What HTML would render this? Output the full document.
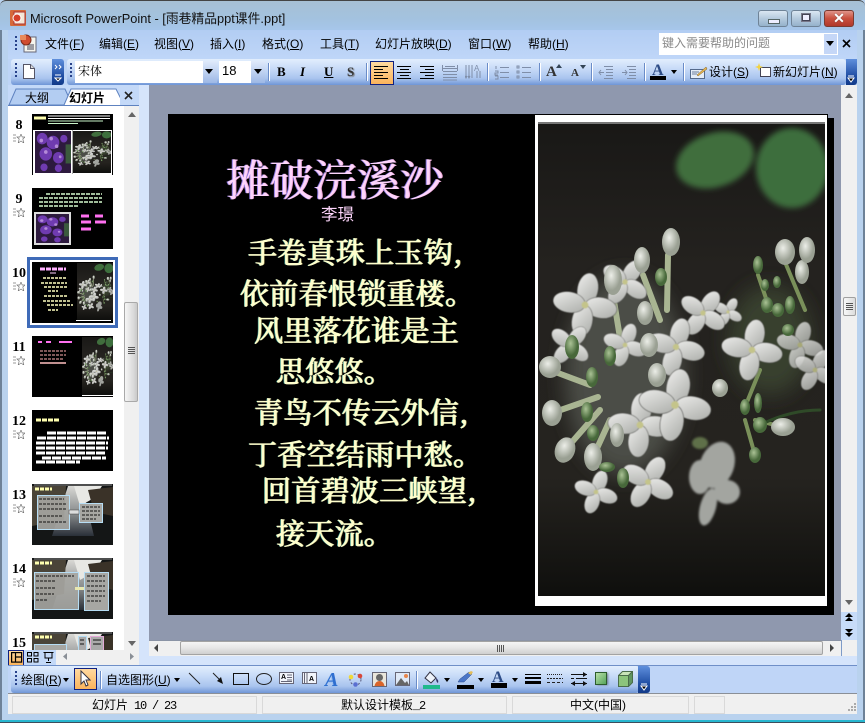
<!DOCTYPE html>
<html lang="zh"><head><meta charset="utf-8"><title>Microsoft PowerPoint</title>
<style>
html,body{margin:0;padding:0;width:865px;height:723px;overflow:hidden;background:#b9d2ee}
body{position:relative;font:12px "Liberation Sans","Noto Sans CJK SC",sans-serif;color:#000}
.a,.t,svg.i{position:absolute}
.t{white-space:nowrap;line-height:16px}
u{text-decoration:underline}
.tb{background:linear-gradient(#e2eefd 0%,#c9dcf8 35%,#a9c4ee 75%,#6f95d6 100%);border-radius:3px}
.cap{background:linear-gradient(#5f8fdc,#1c4aa0 70%,#123a88)}
.sep{position:absolute;width:1px;background:#6a8cc8;border-right:1px solid #fff}
.grip{position:absolute;width:2px;height:14px;background:repeating-linear-gradient(#27418a 0 2px,transparent 2px 4px)}
.num{position:absolute;left:9px;width:20px;text-align:center;font:bold 14px "Liberation Serif",serif}
.star{position:absolute;left:13px;width:12px;height:9px}
.th{position:absolute;left:32px;width:81px;height:61px;background:#000;overflow:hidden}
.p{position:absolute;font:400 29px/38px "Noto Serif CJK SC","Liberation Serif",serif;color:#ffffcc;-webkit-text-stroke:.7px #ffffcc;text-shadow:-1px 0 0 #3f9f9a,1px 0 0 #a89a60;white-space:nowrap;letter-spacing:.3px}
.btn{position:absolute;background:linear-gradient(#ffd9a0,#fbb45c);border:1px solid #10207f}
.m{font:12px/16px 'Liberation Mono',monospace;letter-spacing:-1.2px}
</style></head><body>
<svg width="0" height="0" style="position:absolute"><defs>
<linearGradient id="pt" x1="0" y1="0" x2="1" y2="1"><stop offset="0" stop-color="#eeeeec"/><stop offset="1" stop-color="#a9aba7"/></linearGradient>
<radialGradient id="bud" cx=".4" cy=".35"><stop offset="0" stop-color="#eceee8"/><stop offset="1" stop-color="#9aa093"/></radialGradient>
<radialGradient id="gb" cx=".4" cy=".35"><stop offset="0" stop-color="#aac295"/><stop offset="1" stop-color="#47683a"/></radialGradient>
<linearGradient id="bg" x1="0" y1="0" x2="0" y2="1"><stop offset="0" stop-color="#191816"/><stop offset=".3" stop-color="#24221f"/><stop offset=".75" stop-color="#25231f"/><stop offset="1" stop-color="#0f0f0d"/></linearGradient>
<filter id="b8"><feGaussianBlur stdDeviation="3"/></filter><filter id="b12"><feGaussianBlur stdDeviation="10"/></filter><filter id="b2"><feGaussianBlur stdDeviation="1"/></filter><filter id="b1"><feGaussianBlur stdDeviation=".5"/></filter>
<g id="f4"><g fill="url(#pt)" stroke="#4a4a46" stroke-width=".5"><ellipse cx="0" cy="-14" rx="9" ry="14"/><ellipse cx="14" cy="0" rx="14" ry="9"/><ellipse cx="0" cy="14" rx="9" ry="14"/><ellipse cx="-14" cy="0" rx="14" ry="9"/></g><circle r="3" fill="#c4c48a"/></g>
<symbol id="fl" viewBox="538 124 287 472" preserveAspectRatio="none">
<rect x="538" y="124" width="287" height="472" fill="url(#bg)"/>
<g filter="url(#b8)"><ellipse cx="715" cy="160" rx="40" ry="27" fill="#3f6e3d" transform="rotate(-18 715 160)"/><ellipse cx="792" cy="168" rx="36" ry="40" fill="#3d6e3e"/></g>
<g filter="url(#b12)"><ellipse cx="625" cy="375" rx="60" ry="100" fill="#4c4d47"/><ellipse cx="770" cy="340" rx="42" ry="55" fill="#39402f"/></g>
<g filter="url(#b2)" fill="#a3a5a0"><ellipse cx="717" cy="465" rx="17" ry="24" transform="rotate(20 717 465)"/><ellipse cx="700" cy="477" rx="11" ry="17"/><ellipse cx="727" cy="492" rx="13" ry="12"/><ellipse cx="708" cy="507" rx="8" ry="19" transform="rotate(15 708 507)"/><ellipse cx="700" cy="443" rx="8" ry="6" fill="#5f7048"/></g>
<g stroke="#a9b592" stroke-width="6" fill="none" stroke-linecap="round"><path d="M668 255 L667 310M643 275 L660 320M613 295 L622 350M550 370 L590 385M552 413 L598 397M565 450 L600 410M593 457 L610 420"/><path d="M785 262 L805 310M758 275 L770 310M745 407 L760 370M755 455 L745 420M783 427 L755 420" stroke="#7a905a" stroke-width="4"/><path d="M760 425 Q790 410 820 410" stroke="#2f4a28" stroke-width="3"/></g>
<g filter="url(#b1)">
<use href="#f4" transform="translate(800 345) rotate(15) scale(.85)" opacity=".8"/>
<use href="#f4" transform="translate(752 350) rotate(10) scale(1.1)"/>
<use href="#f4" transform="translate(815 370) rotate(30) scale(.8)" opacity=".85"/>
<use href="#f4" transform="translate(728 312) rotate(30) scale(.55)"/>
<use href="#f4" transform="translate(703 313) rotate(35) scale(.9)"/>
<use href="#f4" transform="translate(625 282) rotate(35) scale(.9)"/>
<use href="#f4" transform="translate(585 305) rotate(10) scale(1.15)"/>
<use href="#f4" transform="translate(570 345) rotate(40) scale(.8)"/>
<use href="#f4" transform="translate(625 345) rotate(20) scale(.8)"/>
<use href="#f4" transform="translate(676 347) rotate(15) scale(1.05)"/>
<use href="#f4" transform="translate(640 425) rotate(5) scale(1.15)"/>
<use href="#f4" transform="translate(675 405) rotate(10) scale(1.3)"/>
<use href="#f4" transform="translate(648 482) rotate(30) scale(1)"/>
<use href="#f4" transform="translate(596 492) rotate(20) scale(.8)"/>
</g>
<g fill="url(#bud)"><ellipse cx="671" cy="242" rx="9" ry="14"/><ellipse cx="642" cy="260" rx="8" ry="13"/><ellipse cx="613" cy="280" rx="9" ry="15"/><ellipse cx="645" cy="313" rx="8" ry="12"/><ellipse cx="649" cy="345" rx="9" ry="12"/><ellipse cx="550" cy="367" rx="11" ry="11"/><ellipse cx="552" cy="413" rx="10" ry="13"/><ellipse cx="565" cy="450" rx="10" ry="13" transform="rotate(20 565 450)"/><ellipse cx="593" cy="457" rx="9" ry="14"/><ellipse cx="617" cy="435" rx="7" ry="12"/><ellipse cx="657" cy="375" rx="9" ry="12"/><ellipse cx="785" cy="252" rx="10" ry="13"/><ellipse cx="802" cy="272" rx="7" ry="12"/><ellipse cx="807" cy="250" rx="8" ry="13"/><ellipse cx="720" cy="388" rx="8" ry="9"/><ellipse cx="783" cy="427" rx="12" ry="9"/></g>
<g fill="url(#gb)"><ellipse cx="661" cy="277" rx="6" ry="9"/><ellipse cx="572" cy="347" rx="7" ry="12"/><ellipse cx="610" cy="356" rx="6" ry="10"/><ellipse cx="592" cy="377" rx="6" ry="10"/><ellipse cx="587" cy="412" rx="6" ry="10"/><ellipse cx="593" cy="433" rx="6" ry="8"/><ellipse cx="607" cy="467" rx="8" ry="5"/><ellipse cx="623" cy="478" rx="6" ry="10"/><ellipse cx="758" cy="265" rx="5" ry="9"/><ellipse cx="767" cy="305" rx="6" ry="8"/><ellipse cx="790" cy="305" rx="5" ry="9"/><ellipse cx="778" cy="310" rx="6" ry="7"/><ellipse cx="788" cy="330" rx="6" ry="6"/><ellipse cx="765" cy="285" rx="4" ry="6"/><ellipse cx="777" cy="282" rx="4" ry="6"/><ellipse cx="760" cy="425" rx="7" ry="8"/><ellipse cx="745" cy="407" rx="5" ry="8"/><ellipse cx="758" cy="403" rx="4" ry="10"/><ellipse cx="755" cy="455" rx="6" ry="8"/></g>
</symbol>
<symbol id="pur" viewBox="0 0 40 44" preserveAspectRatio="none"><rect width="40" height="44" fill="#2d1a3e"/><g fill="#6f3bb0"><circle cx="8" cy="8" r="6"/><circle cx="20" cy="12" r="7"/><circle cx="32" cy="8" r="4"/><circle cx="12" cy="24" r="7"/><circle cx="26" cy="28" r="6"/><circle cx="10" cy="38" r="4"/><circle cx="26" cy="39" r="4"/></g><g fill="#b48ad8"><circle cx="7" cy="10" r="2"/><circle cx="18" cy="8" r="2"/><circle cx="24" cy="16" r="2"/><circle cx="12" cy="22" r="2"/><circle cx="28" cy="27" r="1.5"/></g><rect x="34" y="14" width="6" height="20" fill="#3b5a3d"/></symbol>
<linearGradient id="alley" x1="0" y1="0" x2="0" y2="1"><stop offset="0" stop-color="#d8d8d4"/><stop offset=".6" stop-color="#7f8284"/><stop offset="1" stop-color="#2a3038"/></linearGradient>
<symbol id="st" viewBox="0 0 81 61" preserveAspectRatio="none"><rect width="81" height="61" fill="#141616"/><path d="M36 2 L50 2 L62 52 L20 52Z" fill="url(#alley)"/><path d="M42 2L70 2L62 14L48 22Z" fill="#e8e8e4"/><path d="M0 2 L34 2 L32 36 L0 42Z" fill="#4a4438"/><path d="M56 6 L81 3 L81 32 L62 28Z" fill="#3a3228"/><path d="M2 1h78" stroke="#888"/></symbol>
</defs></svg>

<!-- window frame + title -->
<div class="a" style="left:0;top:0;width:865px;height:30px;background:linear-gradient(#a7c0d4,#a3c2df 60%,#a6c6ea);border-top:1px solid #444;box-sizing:border-box;border-radius:6px 6px 0 0"></div>
<div class="a" style="left:0;top:30px;width:2px;height:693px;background:#6e8298"></div>
<div class="a" style="right:0;top:30px;width:2px;height:693px;background:#6e8298"></div>
<svg class="i" style="left:10px;top:10px" width="16" height="16"><rect width="16" height="16" rx="1" fill="#d5693a"/><rect x="4" y="2" width="11" height="12" fill="#f4e6d6" stroke="#a33"/><circle cx="7" cy="8" r="4" fill="#d5402a" stroke="#fff"/></svg>
<div class="t" style="left:30px;top:11px;font-size:12.8px;color:#111">Microsoft PowerPoint - [雨巷精品ppt课件.ppt]</div>
<div class="a" style="left:758px;top:10px;width:30px;height:17px;box-sizing:border-box;border:1px solid #6f8397;border-radius:3px;background:linear-gradient(#dbe7f2,#b5cadd 50%,#95b2cb)"><div class="a" style="left:9px;top:8px;width:10px;height:3px;background:#eef;border:1px solid #566"></div></div>
<div class="a" style="left:791px;top:10px;width:30px;height:17px;box-sizing:border-box;border:1px solid #6f8397;border-radius:3px;background:linear-gradient(#dbe7f2,#b5cadd 50%,#95b2cb)"><div class="a" style="left:10px;top:3px;width:6px;height:5px;border:1px solid #445;outline:1px solid #778;background:#eef"></div></div>
<div class="a" style="left:824px;top:10px;width:30px;height:17px;box-sizing:border-box;border:1px solid #7a3a30;border-radius:3px;background:linear-gradient(#e0958a,#c9503e 50%,#b0382a);color:#fff;font:bold 14px/15px 'Liberation Sans',sans-serif;text-align:center;text-shadow:0 0 1px #444">✕</div>

<!-- menu band -->
<div class="a" style="left:8px;top:30px;width:849px;height:29px;background:linear-gradient(#b2cdf3,#bfd6f8)"></div>
<div class="grip" style="left:15px;top:36px;height:16px"></div>
<svg class="i" style="left:19px;top:34px" width="18" height="19"><rect x="5" y="3" width="12" height="15" fill="#f5f5ee" stroke="#667"/><path d="M8 11h7M8 13h7M8 15h7" stroke="#445"/><circle cx="7" cy="6" r="5" fill="#cf4b30" stroke="#7c2a1a"/><rect x="1" y="1" width="6" height="5" fill="#e88a5c"/></svg>
<div class="t" style="left:45px;top:36px">文件(<u>F</u>)</div><div class="t" style="left:99px;top:36px">编辑(<u>E</u>)</div><div class="t" style="left:154px;top:36px">视图(<u>V</u>)</div><div class="t" style="left:210px;top:36px">插入(<u>I</u>)</div><div class="t" style="left:262px;top:36px">格式(<u>O</u>)</div><div class="t" style="left:320px;top:36px">工具(<u>T</u>)</div><div class="t" style="left:375px;top:36px">幻灯片放映(<u>D</u>)</div><div class="t" style="left:468px;top:36px">窗口(<u>W</u>)</div><div class="t" style="left:528px;top:36px">帮助(<u>H</u>)</div>
<div class="a" style="left:659px;top:33px;width:164px;height:22px;background:#fff"></div>
<div class="a" style="left:823px;top:33px;width:13px;height:20px;background:#c5d7f7;border:1px solid #fff"></div>
<svg class="i" style="left:826px;top:41px" width="9" height="6"><path d="M0 0h8L4 5z" fill="#000"/></svg>
<div class="t" style="left:662px;top:35px;color:#8a8a8a">键入需要帮助的问题</div>
<svg class="i" style="left:842px;top:39px" width="9" height="9"><path d="M1 1l7 7M8 1L1 8" stroke="#000" stroke-width="1.6"/></svg>

<!-- toolbars row -->
<div class="a" style="left:8px;top:59px;width:849px;height:26px;background:#bdd4f6"></div>
<div class="a tb" style="left:11px;top:59px;width:52px;height:26px"></div>
<div class="a cap" style="left:52px;top:59px;width:12px;height:26px;border-radius:0 3px 3px 0"></div>
<div class="grip" style="left:15px;top:63px;height:14px"></div>
<svg class="i" style="left:23px;top:64px" width="12" height="15"><path d="M.5.5h7l4 4v10H.5z" fill="#fff" stroke="#556"/><path d="M7.5.5v4h4" fill="#ddd" stroke="#556"/></svg>
<svg class="i" style="left:54px;top:64px" width="8" height="20"><path d="M1 1l2 2-2 2M5 1l2 2-2 2" stroke="#fff" fill="none"/><path d="M1 11h6M1 14h6l-3 3z" stroke="#fff" fill="#000"/></svg>
<div class="a tb" style="left:67px;top:59px;width:779px;height:26px"></div>
<div class="a cap" style="left:846px;top:59px;width:11px;height:26px;border-radius:0 0 3px 0"></div>
<svg class="i" style="left:847px;top:75px" width="8" height="9"><path d="M1 1h6M1 3h6l-3 4z" stroke="#fff" fill="#000"/></svg>
<div class="grip" style="left:70px;top:63px;height:14px"></div>
<div class="a" style="left:75px;top:61px;width:128px;height:22px;background:#fff"></div>
<div class="a" style="left:203px;top:61px;width:14px;height:22px;background:linear-gradient(#dfeafb,#9db8e6)"></div>
<svg class="i" style="left:205px;top:69px" width="9" height="6"><path d="M0 0h8L4 5z"/></svg>
<div class="t" style="left:78px;top:63px;font-size:12px;font-family:'Noto Serif CJK SC',serif">宋体</div>
<div class="a" style="left:219px;top:61px;width:32px;height:22px;background:#fff"></div>
<div class="a" style="left:251px;top:61px;width:14px;height:22px;background:linear-gradient(#dfeafb,#9db8e6)"></div>
<svg class="i" style="left:254px;top:69px" width="9" height="6"><path d="M0 0h8L4 5z"/></svg>
<div class="t" style="left:222px;top:63px;font-size:13px">18</div>
<div class="sep" style="left:268px;top:63px;height:18px"></div>
<div class="t" style="left:277px;top:64px;font:bold 13px/16px 'Liberation Serif',serif">B</div>
<div class="t" style="left:300px;top:64px;font:italic bold 13px/16px 'Liberation Serif',serif">I</div>
<div class="t" style="left:324px;top:64px;font:bold 13px/16px 'Liberation Serif',serif;text-decoration:underline">U</div>
<div class="t" style="left:347px;top:64px;font:bold 13px/16px 'Liberation Serif',serif;color:#333;text-shadow:1px 1px 1px #777">S</div>
<div class="sep" style="left:366px;top:63px;height:18px"></div>
<div class="btn" style="left:370px;top:61px;width:22px;height:22px"></div>
<svg class="i" style="left:374px;top:65px" width="15" height="15"><path d="M0 1.5h14M0 4.5h9M0 7.5h14M0 10.5h9M0 13.5h14" stroke="#000"/></svg>
<svg class="i" style="left:397px;top:65px" width="15" height="15"><path d="M0 1.5h14M3 4.5h9M0 7.5h14M3 10.5h9M0 13.5h14" stroke="#000"/></svg>
<svg class="i" style="left:420px;top:65px" width="15" height="15"><path d="M0 1.5h14M5 4.5h9M0 7.5h14M5 10.5h9M0 13.5h14" stroke="#000"/></svg>
<svg class="i" style="left:442px;top:64px" width="16" height="17" stroke="#7f8ea8" fill="none"><path d="M1 4.5h14M1 7.5h14M1 10.5h14M1 13.5h14M1 16h14M.5 1v6M15.5 1v6M3 2.5h10"/></svg>
<svg class="i" style="left:465px;top:64px" width="16" height="17" stroke="#7f8ea8" fill="none"><path d="M1 1v13M4 1v13M7 1v13M12 7v7M15 7v7M0 12l1 2 1-2M3 12l1 2 1-2"/><text x="9" y="7" font-size="8" fill="#7f8ea8" stroke="none" font-family="Liberation Sans">A</text></svg>
<div class="sep" style="left:487px;top:63px;height:18px"></div>
<svg class="i" style="left:494px;top:65px" width="16" height="15" stroke="#7f8ea8"><path d="M6 2.5h9M6 7.5h9M6 12.5h9M2 1v3M1 6h3v2H1v2h3M1 11h3v3H1" fill="none"/></svg>
<svg class="i" style="left:516px;top:65px" width="16" height="15" stroke="#7f8ea8" fill="none"><path d="M6 2.5h9M6 7.5h9M6 12.5h9M1 1h2v2H1zM1 6h2v2H1zM1 11h2v2H1z"/></svg>
<div class="sep" style="left:539px;top:63px;height:18px"></div>
<div class="t" style="left:546px;top:63px;font:bold 15px/18px 'Liberation Serif',serif;color:#333">A</div>
<svg class="i" style="left:556px;top:64px" width="7" height="4"><path d="M0 4h6L3 0z" fill="#345"/></svg>
<div class="t" style="left:571px;top:66px;font:bold 11px/14px 'Liberation Serif',serif;color:#333">A</div>
<svg class="i" style="left:580px;top:65px" width="7" height="4"><path d="M0 0h6L3 4z" fill="#345"/></svg>
<div class="sep" style="left:591px;top:63px;height:18px"></div>
<svg class="i" style="left:598px;top:65px" width="16" height="15" stroke="#7f8ea8"><path d="M6 1.5h9M8 4.5h7M8 7.5h7M8 10.5h7M6 13.5h9M6 7.5H1M3 5L1 7.5 3 10" fill="none"/></svg>
<svg class="i" style="left:621px;top:65px" width="16" height="15" stroke="#7f8ea8"><path d="M6 1.5h9M8 4.5h7M8 7.5h7M8 10.5h7M6 13.5h9M1 7.5h5M4 5l2 2.5L4 10" fill="none"/></svg>
<div class="sep" style="left:644px;top:63px;height:18px"></div>
<div class="t" style="left:652px;top:62px;font:bold 16px/17px 'Liberation Serif',serif;color:#2d4c86">A</div>
<div class="a" style="left:650px;top:76px;width:16px;height:4px;background:#000"></div>
<svg class="i" style="left:671px;top:70px" width="7" height="4"><path d="M0 0h6L3 4z"/></svg>
<div class="sep" style="left:683px;top:63px;height:18px"></div>
<svg class="i" style="left:690px;top:65px" width="18" height="14"><rect x=".5" y="4.5" width="14" height="9" fill="#e5edf8" stroke="#556a8c"/><path d="M2 7h7M2 9h5" stroke="#6d7f9c"/><path d="M7 10l9-8 1 2-9 7z" fill="#e7b653" stroke="#7a5c22" stroke-width=".5"/></svg>
<div class="t" style="left:709px;top:64px">设计(<u>S</u>)</div>
<svg class="i" style="left:755px;top:63px" width="16" height="15"><rect x="5.500" y="4.500" width="10" height="9" fill="#fff" stroke="#445"/><path d="M4 0l1 3 3 1-3 1-1 3-1-3-3-1 3-1z" fill="#f3d23e"/></svg>
<div class="t" style="left:773px;top:64px">新幻灯片(<u>N</u>)</div>

<!-- left pane -->
<div class="a" style="left:8px;top:85px;width:141px;height:20px;background:#c4d9f8"></div>
<div class="a" style="left:8px;top:105px;width:131px;height:1px;background:#5e82c0"></div>
<svg class="i" style="left:8px;top:88px" width="112" height="18"><path d="M1 17 L8 1 H57 L62 12 L56 17Z" fill="#b3cdf2" stroke="#5e82c0"/><path d="M56 17 L63 1 H108 L116 17" fill="#fff" stroke="#5e82c0"/></svg>
<div class="t" style="left:25px;top:90px">大纲</div>
<div class="t" style="left:69px;top:90px;font-weight:bold">幻灯片</div>
<svg class="i" style="left:124px;top:91px" width="9" height="9"><path d="M1 1l7 7M8 1L1 8" stroke="#222" stroke-width="1.6"/></svg>
<div class="a" style="left:139px;top:85px;width:10px;height:580px;background:#d5e4fb"></div>
<div class="a" style="left:8px;top:106px;width:116px;height:544px;background:#fff"></div>
<div class="a" style="left:124px;top:106px;width:15px;height:544px;background:#f0f0f0"></div>
<svg class="i" style="left:128px;top:112px" width="9" height="5"><path d="M0 5h8L4 0z" fill="#666"/></svg>
<svg class="i" style="left:128px;top:641px" width="9" height="5"><path d="M0 0h8L4 5z" fill="#666"/></svg>
<div class="a" style="left:124px;top:302px;width:14px;height:100px;box-sizing:border-box;border:1px solid #a9a9a9;border-radius:2px;background:linear-gradient(90deg,#f6f6f6,#dadada 70%,#c9c9c9)"></div>
<div class="a" style="left:128px;top:347px;width:7px;height:8px;background:repeating-linear-gradient(#555 0 1px,transparent 1px 2px)"></div>

<!-- thumbnails -->
<div class="num" style="top:118px">8</div><svg class="star" style="top:134px" viewBox="0 0 12 9"><path d="M0 1h3M0 4h3M0 7h3M8 0l1.2 3H12L9.8 5l1 4L8 7 5.200 9l1-4L4 3h2.800z" fill="#fff" stroke="#777" stroke-width=".7"/></svg>
<div class="th" style="top:114px"><svg class="a" style="left:0;top:0" width="81" height="61"><path d="M2 4h12" stroke="#ffffb0" stroke-width="3"/><path d="M16 2h62M16 4.500h62" stroke="#fff"/><path d="M16 7h55" stroke="#c9f3c9"/><path d="M16 9.500h30" stroke="#c9f3c9"/><rect x="1" y="16" width="79" height="45" fill="#fff"/><use href="#pur" x="3" y="17" width="36" height="42"/><rect x="40" y="16" width="1" height="44" fill="#aaa"/><use href="#fl" x="41" y="17" width="38" height="42"/></svg></div>

<div class="num" style="top:192px">9</div><svg class="star" style="top:208px" viewBox="0 0 12 9"><path d="M0 1h3M0 4h3M0 7h3M8 0l1.2 3H12L9.8 5l1 4L8 7 5.200 9l1-4L4 3h2.800z" fill="#fff" stroke="#777" stroke-width=".7"/></svg>
<div class="th" style="top:188px"><svg width="81" height="61"><path d="M14 6h56M7 10h63M7 14h63M7 18h40" stroke="#d5fbcd" stroke-width="1.5" stroke-dasharray="4 1"/><rect x="2" y="24" width="37" height="33" fill="#ddd"/><use href="#pur" x="4" y="26" width="33" height="29"/><path d="M49 28h8M63 28h8M49 34h10M63 34h11M49 41h10" stroke="#ff70f0" stroke-width="3"/></svg></div>

<div class="a" style="left:27px;top:257px;width:91px;height:71px;box-sizing:border-box;border:3px solid #3f6bb8"></div>
<div class="num" style="top:266px">10</div><svg class="star" style="top:282px" viewBox="0 0 12 9"><path d="M0 1h3M0 4h3M0 7h3M8 0l1.2 3H12L9.8 5l1 4L8 7 5.200 9l1-4L4 3h2.800z" fill="#fff" stroke="#777" stroke-width=".7"/></svg>
<div class="th" style="top:262px"><svg width="81" height="61"><path d="M8 7h26" stroke="#ffb0ff" stroke-width="3" stroke-dasharray="5 1"/><path d="M18 11h6" stroke="#ffd0ff"/><path d="M11 16h23M9 21h26M12 25h24M16 29h10M12 34h24M11 39h27M15 43h26M16 48h10" stroke="#ffffc0" stroke-dasharray="3 1" stroke-width="1.400"/><use href="#fl" x="45" y="1" width="36" height="57"/><rect x="44" y="58" width="35" height="1" fill="#fff"/></svg></div>

<div class="num" style="top:340px">11</div><svg class="star" style="top:356px" viewBox="0 0 12 9"><path d="M0 1h3M0 4h3M0 7h3M8 0l1.2 3H12L9.8 5l1 4L8 7 5.200 9l1-4L4 3h2.800z" fill="#fff" stroke="#777" stroke-width=".7"/></svg>
<div class="th" style="top:336px"><svg width="81" height="61"><path d="M6 6h4M14 6h5M27 6h13" stroke="#ff70f0" stroke-width="2"/><path d="M8 15h26M8 19h26M8 23h24" stroke="#ffb0b0" stroke-dasharray="3 1"/><path d="M8 27h26" stroke="#ffc0c0" stroke-width="1.600"/><use href="#fl" x="50" y="1" width="31" height="58"/><rect x="50" y="59" width="31" height="1" fill="#fff"/></svg></div>

<div class="num" style="top:414px">12</div><svg class="star" style="top:430px" viewBox="0 0 12 9"><path d="M0 1h3M0 4h3M0 7h3M8 0l1.2 3H12L9.8 5l1 4L8 7 5.200 9l1-4L4 3h2.800z" fill="#fff" stroke="#777" stroke-width=".7"/></svg>
<div class="th" style="top:410px"><svg width="81" height="61"><path d="M4 10h24" stroke="#ffffb0" stroke-width="3" stroke-dasharray="5 1"/><path d="M15 23h60M5 28h72M4 33h72M4 38h72M4 43h70M10 48h64M4 52h44" stroke="#fff" stroke-width="3" stroke-dasharray="9 1"/></svg></div>

<div class="num" style="top:488px">13</div><svg class="star" style="top:504px" viewBox="0 0 12 9"><path d="M0 1h3M0 4h3M0 7h3M8 0l1.2 3H12L9.8 5l1 4L8 7 5.200 9l1-4L4 3h2.800z" fill="#fff" stroke="#777" stroke-width=".7"/></svg>
<div class="th" style="top:484px"><svg width="81" height="61"><use href="#st" width="81" height="61"/><path d="M3 5h17" stroke="#ffffb0" stroke-width="3" stroke-dasharray="4 1"/><rect x="5.500" y="11.500" width="32" height="34" fill="#a7a7a3" fill-opacity=".9" stroke="#b6ddf4"/><path d="M7 15h25M7 20h28M7 25h28M7 32h24M7 38h28" stroke="#111" stroke-dasharray="3 1"/><rect x="47.500" y="19.500" width="23" height="19" fill="#a7a7a3" stroke="#b6ddf4"/><path d="M50 23h18M50 27h18M50 31h18M50 35h14" stroke="#111" stroke-dasharray="3 1"/><rect x="37" y="26" width="10" height="4" fill="#ddd" stroke="#444" stroke-width=".5"/></svg></div>

<div class="num" style="top:562px">14</div><svg class="star" style="top:578px" viewBox="0 0 12 9"><path d="M0 1h3M0 4h3M0 7h3M8 0l1.2 3H12L9.8 5l1 4L8 7 5.200 9l1-4L4 3h2.800z" fill="#fff" stroke="#777" stroke-width=".7"/></svg>
<div class="th" style="top:558px"><svg width="81" height="61"><use href="#st" width="81" height="61"/><path d="M3 5h17" stroke="#ffffb0" stroke-width="3" stroke-dasharray="4 1"/><rect x="2.500" y="14.500" width="44" height="37" fill="#a7a7a3" fill-opacity=".9" stroke="#b6ddf4"/><path d="M4 18h38M4 23h20M4 30h20M4 36h18M4 42h12" stroke="#111" stroke-dasharray="3 1"/><rect x="52.500" y="14.500" width="24" height="38" fill="#a7a7a3" stroke="#b6ddf4"/><path d="M55 18h18M55 23h18M55 28h18M55 33h18M55 38h18M55 43h14" stroke="#111" stroke-dasharray="3 1"/><rect x="43" y="29" width="9" height="3" fill="#e8e8b0"/></svg></div>

<div class="num" style="top:636px">15</div>
<div class="th" style="top:632px;height:18px"><svg width="81" height="18"><use href="#st" width="81" height="61"/><path d="M3 5h17" stroke="#ffffb0" stroke-width="3" stroke-dasharray="4 1"/><rect x="2.500" y="12.500" width="32" height="10" fill="#a7a7a3" stroke="#b6ddf4"/><rect x="46.500" y="4.500" width="8" height="16" fill="#aaa" stroke="#b6ddf4"/><rect x="58.500" y="4.500" width="13" height="16" fill="#aaa" stroke="#e4a9d8"/><path d="M48 8h4M48 12h4M61 8h8M61 12h8" stroke="#111"/></svg></div>

<!-- view buttons -->
<div class="a" style="left:8px;top:650px;width:48px;height:15px;background:#c3d9f8"></div>
<div class="a" style="left:56px;top:650px;width:83px;height:15px;background:#f0f0f0"></div>
<div class="btn" style="left:8px;top:650px;width:14px;height:14px"></div>
<svg class="i" style="left:11px;top:652px" width="12" height="11" fill="none" stroke="#000" stroke-width="1.200"><rect x=".6" y=".6" width="10" height="9.500"/><path d="M4.500.6v9.500M4.500 5h6"/></svg>
<svg class="i" style="left:27px;top:652px" width="12" height="11" fill="none" stroke="#000"><rect x=".5" y=".5" width="4" height="3.500"/><rect x="7" y=".5" width="4" height="3.500"/><rect x=".5" y="6.500" width="4" height="3.500"/><rect x="7" y="6.500" width="4" height="3.500"/></svg>
<svg class="i" style="left:43px;top:652px" width="12" height="12" fill="none" stroke="#000"><path d="M.5.5h10M2 .5v5.500h7V.5M5.500 6v3M3 10.500h5"/></svg>
<svg class="i" style="left:63px;top:653px" width="4" height="8"><path d="M4 0v7L0 3.500z" fill="#8a8f96"/></svg>
<svg class="i" style="left:130px;top:653px" width="4" height="8"><path d="M0 0v7l4-3.500z" fill="#8a8f96"/></svg>

<!-- main gray -->
<div class="a" style="left:149px;top:85px;width:692px;height:555px;background:#8f98ae"></div>
<!-- slide -->
<div class="a" style="left:168px;top:114px;width:660px;height:501px;background:#000"></div>
<div class="a" style="left:828px;top:118px;width:6px;height:497px;background:#000"></div>
<div class="a" style="left:535px;top:115px;width:292px;height:491px;background:#fff"></div>
<svg class="i" style="left:538px;top:124px" width="287" height="472"><use href="#fl" width="287" height="472"/></svg>
<div class="a" style="left:538px;top:122px;width:287px;height:2px;background:#777"></div>
<div class="t" style="left:226px;top:150px;font:400 43.500px/56px 'Noto Serif CJK SC','Liberation Serif',serif;color:#fdd5fb;text-shadow:-1px 0 0 #8a78e0,1px 0 0 #f0a8d8">摊破浣溪沙</div>
<div class="t" style="left:321px;top:203px;font:400 16.500px/20px 'Noto Sans CJK SC',sans-serif;color:#fdd5fb">李璟</div>
<div class="p" style="left:248px;top:233px">手卷真珠上玉钩,</div>
<div class="p" style="left:240px;top:274px">依前春恨锁重楼。</div>
<div class="p" style="left:254px;top:311px">风里落花谁是主</div>
<div class="p" style="left:276px;top:352px">思悠悠。</div>
<div class="p" style="left:254px;top:393px">青鸟不传云外信,</div>
<div class="p" style="left:248px;top:435px">丁香空结雨中愁。</div>
<div class="p" style="left:262px;top:471px">回首碧波三峡望,</div>
<div class="p" style="left:276px;top:514px">接天流。</div>

<!-- vertical scrollbar -->
<div class="a" style="left:841px;top:85px;width:16px;height:527px;background:#f0f0f0"></div>
<svg class="i" style="left:845px;top:93px" width="9" height="5"><path d="M0 5h8L4 0z" fill="#666"/></svg>
<svg class="i" style="left:845px;top:600px" width="9" height="5"><path d="M0 0h8L4 5z" fill="#666"/></svg>
<div class="a" style="left:843px;top:297px;width:13px;height:19px;box-sizing:border-box;border:1px solid #a0a0a0;border-radius:2px;background:linear-gradient(90deg,#f8f8f8,#ddd)"></div>
<div class="a" style="left:846px;top:303px;width:7px;height:7px;background:repeating-linear-gradient(#555 0 1px,transparent 1px 2px)"></div>
<div class="a" style="left:841px;top:612px;width:16px;height:28px;background:#c7dcf9"></div>
<svg class="i" style="left:845px;top:613px" width="9" height="26"><path d="M4 0l4 4H0zM4 4l4 4H0z" fill="#000"/><rect x="3" y="7" width="2" height="1" fill="#000"/><path d="M0 16h8l-4 4zM0 20h8l-4 4z" fill="#000"/></svg>

<!-- horizontal scrollbar -->
<div class="a" style="left:149px;top:640px;width:693px;height:16px;background:#f0f0f0;border-top:1px solid #8a93a5;box-sizing:border-box"></div>
<svg class="i" style="left:154px;top:644px" width="5" height="9"><path d="M4 0v8L0 4z" fill="#444"/></svg>
<svg class="i" style="left:830px;top:644px" width="5" height="9"><path d="M0 0v8l4-4z" fill="#444"/></svg>
<div class="a" style="left:180px;top:641px;width:643px;height:14px;box-sizing:border-box;border:1px solid #a3a3a3;border-radius:2px;background:linear-gradient(#f5f5f5,#e6e6e6 50%,#cfcfcf)"></div>
<div class="a" style="left:497px;top:645px;width:7px;height:7px;background:repeating-linear-gradient(90deg,#555 0 1px,transparent 1px 2px)"></div>
<div class="a" style="left:841px;top:640px;width:16px;height:16px;background:#f0f0f0;border-left:1px solid #7e9bc8;box-sizing:border-box"></div>
<div class="a" style="left:149px;top:656px;width:708px;height:9px;background:#d5e4fb"></div>

<!-- drawing toolbar -->
<div class="a" style="left:8px;top:665px;width:849px;height:28px;background:#bfd5f7;border-top:1px solid #6f8fc8;box-sizing:border-box"></div>
<div class="a tb" style="left:11px;top:666px;width:628px;height:27px"></div>
<div class="a cap" style="left:638px;top:666px;width:12px;height:27px;border-radius:0 3px 3px 0"></div>
<svg class="i" style="left:640px;top:683px" width="8" height="9"><path d="M1 1h6M1 3h6l-3 4z" stroke="#fff" fill="#000"/></svg>
<div class="grip" style="left:15px;top:671px;height:14px"></div>
<div class="t" style="left:21px;top:672px">绘图(<u>R</u>)</div>
<svg class="i" style="left:63px;top:678px" width="7" height="4"><path d="M0 0h6L3 4z"/></svg>
<div class="btn" style="left:74px;top:668px;width:21px;height:20px"></div>
<svg class="i" style="left:80px;top:670px" width="11" height="17"><path d="M1 1v13l3-3 2 5 2-1-2-5h4z" fill="#fff" stroke="#334" stroke-width="1"/></svg>
<div class="sep" style="left:100px;top:671px;height:18px"></div>
<div class="t" style="left:106px;top:672px">自选图形(<u>U</u>)</div>
<svg class="i" style="left:174px;top:678px" width="7" height="4"><path d="M0 0h6L3 4z"/></svg>
<svg class="i" style="left:188px;top:672px" width="13" height="13"><path d="M1 1l11 11" stroke="#222"/></svg>
<svg class="i" style="left:212px;top:672px" width="12" height="13"><path d="M1 1l8 8" stroke="#222"/><path d="M11 12L5 9l4-4z" fill="#111"/></svg>
<svg class="i" style="left:233px;top:673px" width="16" height="12"><rect x=".5" y=".5" width="15" height="11" fill="none" stroke="#111"/></svg>
<svg class="i" style="left:256px;top:673px" width="16" height="12"><ellipse cx="8" cy="6" rx="7.500" ry="5.500" fill="none" stroke="#222"/></svg>
<svg class="i" style="left:279px;top:672px" width="15" height="13"><rect x=".5" y=".5" width="14" height="11" fill="#f2f5fb" stroke="#667"/><text x="2" y="7" font-size="7" font-weight="bold" font-family="Liberation Sans">A</text><path d="M8 3h5M8 5.500h5M8 8h5M2 9.500h11" stroke="#667"/></svg>
<svg class="i" style="left:302px;top:672px" width="15" height="13"><rect x=".5" y=".5" width="14" height="11" fill="#f2f5fb" stroke="#667"/><path d="M2.500 1v10M5 1v10" stroke="#667"/><text x="7" y="9" font-size="7" font-weight="bold" font-family="Liberation Sans">A</text></svg>
<div class="t" style="left:325px;top:669px;font:italic bold 20px/22px 'Liberation Serif',serif;color:#2f6fd0;text-shadow:-1px 1px 0 #9cc0ef">A</div>
<svg class="i" style="left:348px;top:672px" width="15" height="15"><circle cx="7.500" cy="7.500" r="5.500" fill="none" stroke="#557" stroke-dasharray="2 2"/><circle cx="3" cy="5" r="2.300" fill="#f0d93a"/><circle cx="12" cy="4" r="2.300" fill="#d8483a"/><circle cx="7.500" cy="12.500" r="2.300" fill="#5a6fd0"/></svg>
<svg class="i" style="left:372px;top:672px" width="15" height="15"><rect x=".5" y=".5" width="14" height="14" fill="#e9e6dc" stroke="#667"/><circle cx="7.500" cy="5.500" r="3.500" fill="#666"/><path d="M2.500 14q1-5 5-5t5 5z" fill="#d9642a"/></svg>
<svg class="i" style="left:395px;top:672px" width="15" height="14"><rect x=".5" y=".5" width="14" height="13" fill="#dfe9f7" stroke="#667"/><path d="M1 13l5-7 4 5 2-2 2 4z" fill="#666"/><circle cx="11" cy="4" r="2" fill="#e8854a"/></svg>
<div class="sep" style="left:416px;top:671px;height:18px"></div>
<svg class="i" style="left:423px;top:671px" width="17" height="18"><path d="M7 1l6 6-5 5-6-5z" fill="#eef3fa" stroke="#334"/><path d="M13 7q3 2 2 5-2-1-2-5z" fill="#336"/><rect y="14" width="17" height="4" fill="#1fb98c"/></svg>
<svg class="i" style="left:444px;top:678px" width="7" height="4"><path d="M0 0h6L3 4z"/></svg>
<svg class="i" style="left:457px;top:671px" width="17" height="18"><path d="M1 11l2-3 9-7 3 2-8 8z" fill="#4a76c8" stroke="#2c4a8a" stroke-width=".5"/><path d="M11 2l3 2 2-3-2-1z" fill="#e5bf5a"/><rect y="14" width="17" height="4" fill="#000"/></svg>
<svg class="i" style="left:478px;top:678px" width="7" height="4"><path d="M0 0h6L3 4z"/></svg>
<div class="t" style="left:492px;top:669px;font:bold 16px/17px 'Liberation Serif',serif;color:#2d4c86">A</div>
<div class="a" style="left:491px;top:683px;width:16px;height:5px;background:#000"></div>
<svg class="i" style="left:512px;top:678px" width="7" height="4"><path d="M0 0h6L3 4z"/></svg>
<div class="a" style="left:525px;top:674px;width:16px;height:1px;background:#000"></div><div class="a" style="left:525px;top:677px;width:16px;height:2px;background:#000"></div><div class="a" style="left:525px;top:681px;width:16px;height:3px;background:#000"></div>
<svg class="i" style="left:547px;top:673px" width="16" height="12" stroke="#222"><path d="M0 1.500h16" stroke-dasharray="1 1"/><path d="M0 5.500h16" stroke-dasharray="2 1"/><path d="M0 9.500h16" stroke-dasharray="3 2"/></svg>
<svg class="i" style="left:571px;top:671px" width="16" height="16" stroke="#111" fill="#111"><path d="M0 3.500h16M0 7.500h3M5 7.500h11M0 12.500h16"/><path d="M16 3.500l-4-2.500v5zM0 12.500l4-2.500v5zM16 12.500l-4-2.500v5z" stroke="none"/></svg>
<div class="a" style="left:597px;top:673px;width:11px;height:12px;background:#000;opacity:.45;filter:blur(1px)"></div>
<div class="a" style="left:595px;top:672px;width:10px;height:11px;border:1px solid #2c5c2c;background:linear-gradient(135deg,#b8e0a8,#56a45a)"></div>
<svg class="i" style="left:618px;top:671px" width="15" height="16"><path d="M.5 4.500h10v11H.5z" fill="#8cc47c" stroke="#4a6c4a"/><path d="M.5 4.500l4-4h10l-4 4z" fill="#c9e4b9" stroke="#4a6c4a"/><path d="M10.500 4.500l4-4v11l-4 4z" fill="#5f9560" stroke="#4a6c4a"/></svg>

<!-- status -->
<div class="a" style="left:8px;top:693px;width:849px;height:21px;background:#f0f0f0;border-top:1px solid #8a8f97;box-sizing:border-box"></div>
<div class="a" style="left:12px;top:696px;width:245px;height:18px;box-sizing:border-box;border:1px solid #d9d9d9"></div>
<div class="a" style="left:262px;top:696px;width:245px;height:18px;box-sizing:border-box;border:1px solid #d9d9d9"></div>
<div class="a" style="left:512px;top:696px;width:177px;height:18px;box-sizing:border-box;border:1px solid #d9d9d9"></div>
<div class="a" style="left:694px;top:696px;width:31px;height:18px;box-sizing:border-box;border:1px solid #d9d9d9"></div>
<div class="t" style="left:92px;top:697px">幻灯片<span class="m"> 10 / 23</span></div>
<div class="t" style="left:341px;top:697px">默认设计模板<span class="m">_2</span></div>
<div class="t" style="left:570px;top:697px">中文(中国)</div>
<svg class="i" style="left:846px;top:703px" width="10" height="10" fill="#aaa"><path d="M8 0h2v2H8zM8 3h2v2H8zM5 3h2v2H5zM8 6h2v2H8zM5 6h2v2H5zM2 6h2v2H2z"/></svg>
<div class="a" style="left:0;top:720px;width:865px;height:2px;background:#27b6cf"></div>
<div class="a" style="left:0;top:722px;width:865px;height:1px;background:#3c4d5c"></div>
</body></html>
